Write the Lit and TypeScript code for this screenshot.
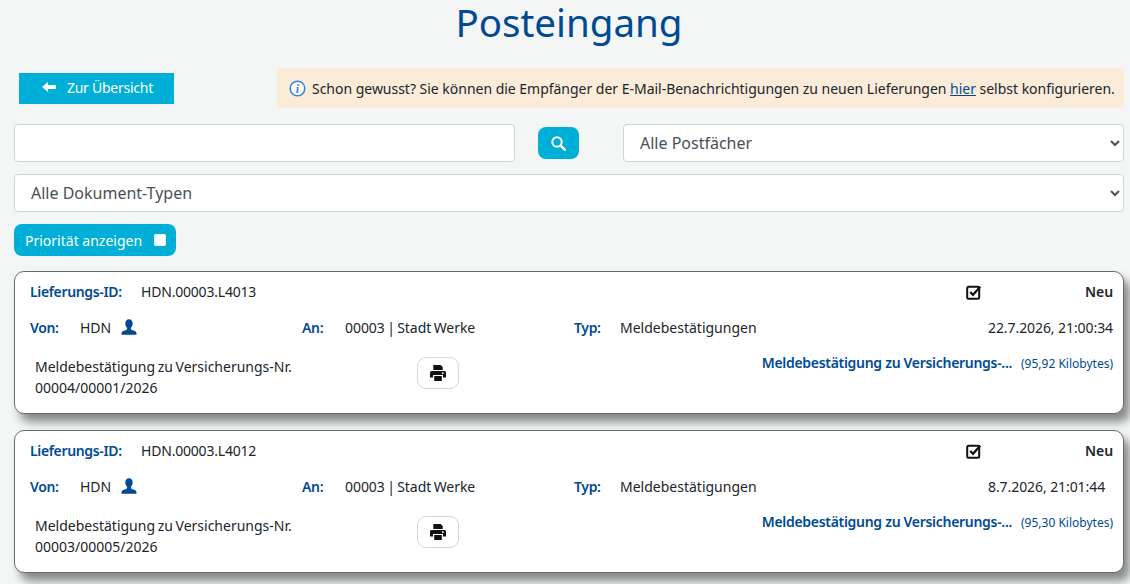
import { LitElement, html, css, svg } from "lit";
import { customElement } from "lit/decorators.js";

const person = svg`<path d="M8 .3c2.300 0 3.700 1.800 3.700 4.200 0 1.700-.8 3.300-1.800 4.200v1.300c0 .5 1 1 2.500 1.500 1.700.6 3.100 1.300 3.100 2.900v1.300H.5v-1.300c0-1.600 1.400-2.300 3.100-2.900 1.500-.5 2.500-1 2.500-1.500V8.700C5.100 7.800 4.300 6.200 4.300 4.500 4.300 2.100 5.700.3 8 .3z"/>`;
const printer = svg`<path d="M3.300 0h7.500l1.900 1.900V5H3.300z"/><path fill-rule="evenodd" d="M1.500 6h13c.8 0 1.500.7 1.500 1.500V12.500h-3V10H3v2.500H0V7.500C0 6.700.7 6 1.500 6zM12.800 7.200a.9.9 0 1 0 .01 0z"/><path d="M4.200 11h7.600v5H4.200z"/>`;

interface Delivery { id: string; date: string; doc: string; size: string; }
const rows: Delivery[] = [
  { id: "HDN.00003.L4013", date: "22.7.2026, 21:00:34", doc: "00004/00001/2026", size: "(95,92 Kilobytes)" },
  { id: "HDN.00003.L4012", date: "8.7.2026, 21:01:44", doc: "00003/00005/2026", size: "(95,30 Kilobytes)" },
];

@customElement("app-root")
export class AppRoot extends LitElement {
  static styles = css`
    :host { display: block; height: 584px; overflow: hidden; background: #f4f6f6; font-family: "Noto Sans", "Open Sans", sans-serif; font-size: 14px; color: #212529; }
    h1 { margin: 0; height: 68px; padding-left: 8px; box-sizing: border-box; text-align: center; font-family: "Noto Sans", sans-serif; font-weight: 400; font-size: 38.5px; line-height: 44px; color: #004a93; }
    .top { display: flex; justify-content: space-between; align-items: flex-start; padding: 0 6px 0 19px; height: 56px; }
    .back { margin-top: 5px; width: 155px; height: 31px; display: flex; align-items: center; justify-content: center; gap: 11px; background: #00afd7; color: #fff; font-size: 14px; letter-spacing: -0.25px; padding: 0 0 3px 2px; box-sizing: border-box; }
    .back svg { width: 14px; height: 10px; fill: #fff; }
    .notice { width: 847px; height: 40px; box-sizing: border-box; background: #fbebd9; display: flex; align-items: center; gap: 6px; padding: 0 0 0 12px; font-size: 14px; letter-spacing: -0.02px; white-space: nowrap; }
    .notice svg { width: 17px; height: 17px; flex: none; }
    .notice a { color: #004a93; text-decoration: underline; }
    .filters { display: flex; align-items: center; padding: 0 6px 0 14px; height: 38px; }
    input, select { box-sizing: border-box; height: 38px; border: 1px solid #ced4da; border-radius: 4px; background-color: #fff; font-family: inherit; font-size: 16px; color: #495057; }
    input { width: 501px; }
    .search { margin: 0 44px 0 23px; width: 41px; height: 32px; border-radius: 8px; background: #00afd7; display: flex; align-items: center; justify-content: center; }
    .search svg { width: 15px; height: 15px; }
    select { padding: 0 0 0 12px; }
    .mail { width: 501px; }
    .types { display: block; margin: 12px 6px 0 14px; width: 1110px; }
    .prio { margin: 12px 0 15px 14px; width: 162px; height: 32px; box-sizing: border-box; border-radius: 8px; background: #00afd7; color: #fff; display: flex; align-items: center; padding: 0 10px 0 11px; justify-content: space-between; font-size: 14px; }
    .prio i { display: block; width: 12px; height: 12px; background: #fff; border-radius: 2px; }
    .cards { display: flex; flex-direction: column; gap: 16px; margin: 0 6px 0 14px; }
    .card { height: 143px; box-sizing: border-box; background: #fff; border: 1px solid #6b6b6b; border-radius: 10px; box-shadow: 6px 8px 10px rgba(0,0,0,.45); padding: 0 10px 0 15px; }
    .l { color: #004a93; font-weight: 600; letter-spacing: -0.35px; }
    .r1 { display: grid; grid-template-columns: 111px 826px 1fr; align-items: center; height: 39px; }
    .id { letter-spacing: -0.2px; }
    .flags { display: grid; grid-template-columns: 1fr 1fr; align-items: center; }
    .check { display: flex; width: 16px; height: 16px; margin-left: -1px; }
    .check svg { width: 16px; height: 16px; }
    .neu { text-align: right; font-weight: 600; letter-spacing: -0.1px; }
    .r2 { display: grid; grid-template-columns: 50px 222px 43px 229px 46px 368px 1fr; align-items: center; height: 32px; white-space: nowrap; }
    .who { display: flex; align-items: center; gap: 10px; }
    .who svg { width: 16px; height: 16px; fill: #004a93; }
    .to { word-spacing: -1.2px; letter-spacing: -0.05px; }
    .date { letter-spacing: -0.08px; }
    .r3 { display: flex; align-items: flex-start; padding: 10px 0 0 5px; }
    .doc { width: 382px; line-height: 21px; padding-top: 3px; word-spacing: -1px; }
    .print { width: 42px; height: 32px; margin-top: 4px; box-sizing: border-box; background: #fff; border: 1px solid #d5d8da; border-radius: 9px; display: flex; align-items: center; justify-content: center; }
    .print svg { width: 16px; height: 16px; fill: #111; }
    .file { margin-left: auto; display: flex; align-items: baseline; gap: 9px; white-space: nowrap; line-height: 20px; }
    .file b { font-weight: 600; color: #004a93; letter-spacing: -0.3px; }
    .file span { color: #004a93; font-size: 12px; }
  `;

  render() {
    return html`
      <h1>Posteingang</h1>
      <div class="top">
        <div class="back"><svg viewBox="0 0 14 10"><path d="M0 5l6-5v3h8v4H6v3z"/></svg>Zur Übersicht</div>
        <div class="notice">
          <svg viewBox="0 0 17 17"><circle cx="8.500" cy="8.500" r="7.300" fill="#fff" stroke="#2f86de" stroke-width="1.500"/><text x="8.500" y="12.800" text-anchor="middle" font-family="Liberation Serif" font-style="italic" font-weight="700" font-size="12" fill="#2f86de">i</text></svg>
          <span>Schon gewusst? Sie können die Empfänger der E-Mail-Benachrichtigungen zu neuen Lieferungen <a href="#">hier</a> selbst konfigurieren.</span>
        </div>
      </div>
      <div class="filters">
        <input type="text" />
        <div class="search"><svg viewBox="0 0 15 15"><circle cx="6" cy="6" r="4.700" fill="none" stroke="#fff" stroke-width="2"/><path d="M9.600 9.600L13.700 13.700" stroke="#fff" stroke-width="2.400" stroke-linecap="round"/></svg></div>
        <select class="mail"><option>Alle Postfächer</option></select>
      </div>
      <select class="types"><option>Alle Dokument-Typen</option></select>
      <div class="prio">Priorität anzeigen<i></i></div>
      <div class="cards">
        ${rows.map((d) => html`
          <div class="card">
            <div class="r1">
              <span class="l">Lieferungs-ID:</span>
              <span class="id">${d.id}</span>
              <div class="flags">
                <span class="check"><svg viewBox="0 0 16 16"><rect x="1.200" y="2.700" width="12" height="12" rx="1.500" fill="none" stroke="#111" stroke-width="2"/><path d="M4.200 8l2.800 2.800 7.200-8" fill="none" stroke="#111" stroke-width="2.200"/></svg></span>
                <span class="neu">Neu</span>
              </div>
            </div>
            <div class="r2">
              <span class="l">Von:</span>
              <span class="who">HDN <svg viewBox="0 0 16 16">${person}</svg></span>
              <span class="l">An:</span>
              <span class="to">00003 | Stadt Werke</span>
              <span class="l">Typ:</span>
              <span>Meldebestätigungen</span>
              <span class="date">${d.date}</span>
            </div>
            <div class="r3">
              <div class="doc">Meldebestätigung zu Versicherungs-Nr.<br />${d.doc}</div>
              <div class="print"><svg viewBox="0 0 16 16">${printer}</svg></div>
              <div class="file"><b>Meldebestätigung zu Versicherungs-...</b><span>${d.size}</span></div>
            </div>
          </div>
        `)}
      </div>
    `;
  }
}
